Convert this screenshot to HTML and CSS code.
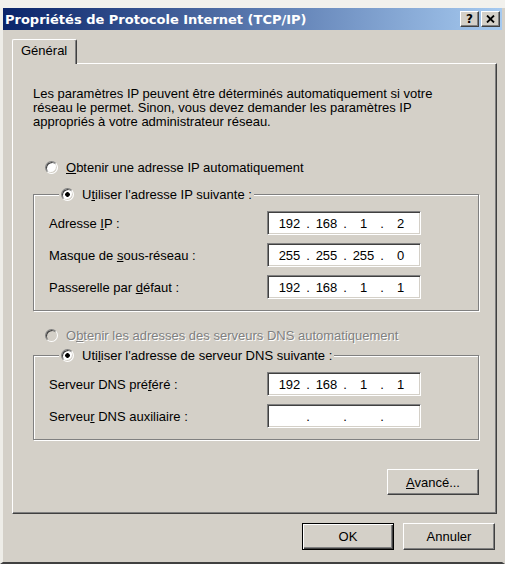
FILE: index.html
```html
<!DOCTYPE html>
<html lang="fr">
<head>
<meta charset="utf-8">
<title>Propriétés de Protocole Internet (TCP/IP)</title>
<link rel="stylesheet" href="styles.css">
</head>
<body>
<div class="window">
  <div class="titlebar">
    <span class="title">Propriétés de Protocole Internet (TCP/IP)</span>
    <div class="caption-buttons">
      <span class="cap-btn help">?</span>
      <span class="cap-btn close"><svg width="9" height="8" viewBox="0 0 9 8"><path d="M1 0.5 L8 7.5 M8 0.5 L1 7.5" stroke="#000" stroke-width="1.8" fill="none"/></svg></span>
    </div>
  </div>
  <div class="client">
    <div class="tabstrip"><div class="tab">Général</div></div>
    <div class="panel">
      <p class="desc">Les paramètres IP peuvent être déterminés automatiquement si votre<br>réseau le permet. Sinon, vous devez demander les paramètres IP<br>appropriés à votre administrateur réseau.</p>
      <div class="radio-row r-auto"><span class="radio"></span><span><u>O</u>btenir une adresse IP automatiquement</span></div>
      <fieldset class="group g-ip">
        <legend><span class="radio checked"></span><span>U<u>t</u>iliser l'adresse IP suivante :</span></legend>
        <div class="fields">
          <span class="label">Adresse <u>I</u>P :</span>
          <div class="ipbox"><span class="oct">192</span><span class="dot">.</span><span class="oct">168</span><span class="dot">.</span><span class="oct">1</span><span class="dot">.</span><span class="oct">2</span></div>
          <span class="label">Masque de <u>s</u>ous-réseau :</span>
          <div class="ipbox"><span class="oct">255</span><span class="dot">.</span><span class="oct">255</span><span class="dot">.</span><span class="oct">255</span><span class="dot">.</span><span class="oct">0</span></div>
          <span class="label">Passerelle par <u>d</u>éfaut :</span>
          <div class="ipbox"><span class="oct">192</span><span class="dot">.</span><span class="oct">168</span><span class="dot">.</span><span class="oct">1</span><span class="dot">.</span><span class="oct">1</span></div>
        </div>
      </fieldset>
      <div class="radio-row r-dns disabled"><span class="radio"></span><span>O<u>b</u>tenir les adresses des serveurs DNS automatiquement</span></div>
      <fieldset class="group g-dns">
        <legend><span class="radio checked"></span><span>Uti<u>l</u>iser l'adresse de serveur DNS suivante :</span></legend>
        <div class="fields">
          <span class="label">Serveur DNS pré<u>f</u>éré :</span>
          <div class="ipbox"><span class="oct">192</span><span class="dot">.</span><span class="oct">168</span><span class="dot">.</span><span class="oct">1</span><span class="dot">.</span><span class="oct">1</span></div>
          <span class="label">Serveu<u>r</u> DNS auxiliaire :</span>
          <div class="ipbox empty"><span class="oct"></span><span class="dot">.</span><span class="oct"></span><span class="dot">.</span><span class="oct"></span><span class="dot">.</span><span class="oct"></span></div>
        </div>
      </fieldset>
      <div class="adv-row"><button class="btn adv"><u>A</u>vancé...</button></div>
    </div>
    <div class="footer">
      <button class="btn default">OK</button>
      <button class="btn">Annuler</button>
    </div>
  </div>
</div>
</body>
</html>
```

FILE: styles.css
```css
html, body {
  margin: 0;
  padding: 0;
}

body {
  width: 505px;
  height: 564px;
  overflow: hidden;
  background: #f2f1ed;
  font-family: "Liberation Sans", Arial, sans-serif;
  font-size: 13px;
  color: #000;
}

.window {
  box-sizing: border-box;
  margin-top: 8px;
  height: 556px;
  background: #d4d0c8;
  border-left: 3px solid #eeede8;
  border-right: 3px solid #d4d0c8;
  border-bottom: 2px solid #404040;
  display: flex;
  flex-direction: column;
}

.titlebar {
  height: 22px;
  flex: none;
  display: flex;
  align-items: center;
  justify-content: space-between;
  padding: 0 2px 0 2px;
  background: linear-gradient(to right, #0a246a, #a6caf0);
}

.title {
  color: #fff;
  font-family: "DejaVu Sans", Verdana, sans-serif;
  font-weight: bold;
  font-size: 13px;
  white-space: nowrap;
}

.caption-buttons {
  display: flex;
  gap: 2px;
}

.cap-btn {
  box-sizing: border-box;
  width: 19px;
  height: 16px;
  display: flex;
  align-items: center;
  justify-content: center;
  background: #d4d0c8;
  border: 1px solid;
  border-color: #fff #404040 #404040 #fff;
  box-shadow: inset -1px -1px 0 #808080;
  font-family: "DejaVu Sans", Verdana, sans-serif;
  font-weight: bold;
  font-size: 12px;
  line-height: 1;
}

.client {
  flex: 1;
  display: flex;
  flex-direction: column;
  padding: 9px 5px 0 9px;
}

.tabstrip {
  display: flex;
  height: 24px;
}

.tab {
  position: relative;
  z-index: 1;
  box-sizing: border-box;
  height: 25px;
  padding: 0 9px 0 8px;
  line-height: 22px;
  background: #d4d0c8;
  border-top: 1px solid #fff;
  border-left: 1px solid #fff;
  border-right: 1px solid #404040;
  border-radius: 2px 2px 0 0;
  box-shadow: inset -1px 0 0 #808080;
}

.panel {
  box-sizing: border-box;
  height: 451px;
  border: 1px solid;
  border-color: #fff #404040 #404040 #fff;
  box-shadow: inset -1px -1px 0 #808080;
  padding: 23px 17px 0 20px;
}

.desc {
  margin: 0;
  line-height: 14px;
}

.radio-row {
  display: flex;
  align-items: center;
  gap: 8px;
  height: 16px;
  padding-left: 12px;
}

.r-auto {
  margin-top: 30px;
}

.r-dns {
  margin-top: 16px;
}

.disabled {
  color: #808080;
  text-shadow: 1px 1px 0 #fff;
}

.radio {
  flex: none;
  box-sizing: border-box;
  width: 13px;
  height: 13px;
  border-radius: 50%;
  border: 1px solid;
  border-color: #808080 #fff #fff #808080;
  background: #fff;
  box-shadow: inset 1px 1px 0 #404040, inset -1px -1px 0 #d4d0c8;
}

.radio.checked {
  background: radial-gradient(circle, #000 0 2px, #fff 2.6px);
}

.disabled .radio {
  background: #d4d0c8;
}

.group {
  margin: 0;
  min-width: 0;
  padding: 9px 0 11px 15px;
  border: 1px solid #808080;
  box-shadow: 1px 1px 0 #fff, inset 1px 1px 0 #fff;
}

.g-ip {
  margin-top: 11px;
}

.g-dns {
  margin-top: 4px;
}

.group legend {
  display: flex;
  align-items: center;
  gap: 8px;
  height: 16px;
  margin-left: 10px;
  padding: 0 2px;
  background: #d4d0c8;
}

.fields {
  display: grid;
  grid-template-columns: 218px 154px;
  row-gap: 8px;
  align-items: center;
}

.ipbox {
  box-sizing: border-box;
  height: 24px;
  display: flex;
  align-items: center;
  padding-left: 6px;
  background: #fff;
  border: 1px solid;
  border-color: #808080 #fff #fff #808080;
  box-shadow: inset 1px 1px 0 #404040, inset -1px -1px 0 #d4d0c8;
}

.oct {
  width: 31px;
  text-align: center;
}

.dot {
  width: 6px;
  text-align: center;
}

.adv-row {
  display: flex;
  justify-content: flex-end;
  margin-top: 29px;
}

.btn {
  box-sizing: border-box;
  width: 92px;
  height: 26px;
  padding: 0;
  background: #d4d0c8;
  color: #000;
  font-family: inherit;
  font-size: 13px;
  border: 1px solid;
  border-color: #fff #404040 #404040 #fff;
  border-radius: 0;
  box-shadow: inset -1px -1px 0 #808080;
}

.footer {
  display: flex;
  justify-content: flex-end;
  gap: 9px;
  margin-top: 9px;
  padding-right: 2px;
}

.footer .btn {
  height: 27px;
}

.btn.default {
  border: 1px solid #000;
  box-shadow: inset 1px 1px 0 #fff, inset -1px -1px 0 #404040, inset -2px -2px 0 #808080;
}
```
